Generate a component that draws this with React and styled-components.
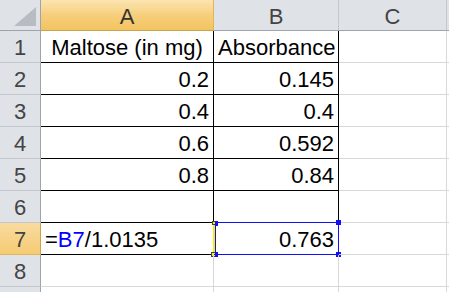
import * as React from "react"
import styled, { createGlobalStyle } from 'styled-components';

// Styles
const Global = createGlobalStyle`
  html, body {
    margin: 0;
    padding: 0;
    background: #ffffff;
    overflow: hidden;
  }
`

const Sheet = styled.div`
  display: grid;
  grid-template-columns: 41px 173px 125px 108px 100px;
  grid-auto-rows: 32px;
  grid-template-rows: 31px;
  font-family: "Liberation Sans", Arial, sans-serif;
  font-size: 22px;
  width: 449px;
  height: 292px;
  overflow: hidden;
`

const Corner = styled.div`
  position: relative;
  background: #dfe3e8;
  border-right: 1px solid #9ea4ab;
  border-bottom: 1px solid #9ea4ab;
  box-sizing: border-box;
`

const CornerMark = styled.div`
  position: absolute;
  right: 4px;
  bottom: 4px;
  width: 0;
  height: 0;
  border-left: 22px solid transparent;
  border-bottom: 19px solid #b7bcc2;
`

const ColHead = styled.div`
  display: flex;
  align-items: center;
  justify-content: center;
  padding-top: 3px;
  box-sizing: border-box;
  color: ${p => p.$active ? '#333333' : '#444444'};
  background: ${p => p.$active
    ? 'linear-gradient(#fbe4b0, #f6cd78 55%, #f3c460)'
    : '#dfe3e8'};
  border-right: 1px solid ${p => p.$active ? '#e2b658' : '#c3c8ce'};
  border-bottom: 1px solid ${p => p.$active ? '#c9a24f' : '#9ea4ab'};
`

const RowHead = styled.div`
  display: flex;
  align-items: center;
  justify-content: center;
  padding-top: 2px;
  box-sizing: border-box;
  color: #444444;
  background: ${p => p.$active ? 'linear-gradient(#f9dba0, #f5cb72)' : '#dfe3e8'};
  border-right: 1px solid ${p => p.$active ? '#c9a24f' : '#9ea4ab'};
  border-bottom: 1px solid ${p => p.$active ? '#e2b658' : '#c3c8ce'};
`

const Cell = styled.div`
  position: relative;
  display: flex;
  align-items: center;
  justify-content: ${p => p.$align === 'right' ? 'flex-end' : p.$align === 'center' ? 'center' : 'flex-start'};
  padding: 2px 4px 0 4px;
  box-sizing: border-box;
  color: #000000;
  white-space: nowrap;
  border-right: 1px solid ${p => p.$br || '#d8d8d8'};
  border-bottom: 1px solid ${p => p.$bb || '#d8d8d8'};
`

const Ref = styled.span`
  color: #0000ff;
`

const BlueBox = styled.div`
  position: absolute;
  left: 1px;
  top: -1px;
  right: -1px;
  bottom: -1px;
  border: 1px solid #1010f0;
  pointer-events: none;
`

const Handle = styled.div`
  position: absolute;
  width: 5px;
  height: 5px;
  background: ${p => p.$color};
  border: ${p => p.$outline ? '1px solid #444' : 'none'};
  box-sizing: border-box;
`

const YellowBar = styled.div`
  position: absolute;
  right: -2px;
  top: -1px;
  bottom: -1px;
  width: 2px;
  background: #f5f000;
`

// Data
const BLACK = '#000000'

const rows = [
  { a: 'Maltose (in mg)', aAlign: 'center', b: 'Absorbance', bAlign: 'left' },
  { a: '0.2', b: '0.145' },
  { a: '0.4', b: '0.4' },
  { a: '0.6', b: '0.592' },
  { a: '0.8', b: '0.84' },
  { a: '', b: '' },
]

// Markup
const App = () => {
  return (
    <Sheet>
      <Global />
      <Corner><CornerMark /></Corner>
      <ColHead $active>A</ColHead>
      <ColHead>B</ColHead>
      <ColHead>C</ColHead>
      <ColHead />

      {rows.map((row, index) => (
        <React.Fragment key={index}>
          <RowHead>{index + 1}</RowHead>
          <Cell $align={row.aAlign || 'right'} $br={BLACK} $bb={BLACK}>{row.a}</Cell>
          <Cell $align={row.bAlign || 'right'} $br={BLACK} $bb={BLACK}>{row.b}</Cell>
          <Cell />
          <Cell />
        </React.Fragment>
      ))}

      <RowHead $active>7</RowHead>
      <Cell $align="left" $br={BLACK} $bb={BLACK}>
        =<Ref>B7</Ref>/1.0135
        <YellowBar />
        <Handle $color="#f5f000" $outline style={{ right: '-3px', top: '-2px', width: '4px', height: '4px' }} />
        <Handle $color="#f5f000" $outline style={{ right: '-3px', bottom: '-3px' }} />
      </Cell>
      <Cell $align="right" $br="#1010f0" $bb="#1010f0">
        0.763
        <BlueBox />
        <Handle $color="#1010f0" style={{ left: '1px', top: '-2px', width: '3px' }} />
        <Handle $color="#1010f0" style={{ right: '-3px', top: '-3px' }} />
        <Handle $color="#1010f0" style={{ right: '-3px', bottom: '-3px' }} />
        <Handle $color="#1010f0" style={{ left: '1px', bottom: '-3px', width: '3px' }} />
      </Cell>
      <Cell />
      <Cell />

      <RowHead>8</RowHead>
      <Cell />
      <Cell />
      <Cell />
      <Cell />

      <RowHead />
      <Cell />
      <Cell />
      <Cell />
      <Cell />
    </Sheet>
  )
}

export default App
